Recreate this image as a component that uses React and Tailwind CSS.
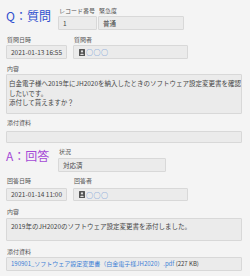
import React from "react";

const FONT = { fontFamily: '"Noto Sans CJK JP", "Noto Sans", sans-serif' };

function Label({ children, className = "" }) {
  return (
    <div className={"h-[10px] pl-[1px] text-[6px] leading-[10px] text-[#555] whitespace-nowrap " + className}>
      {children}
    </div>
  );
}

function Box({ children, className = "" }) {
  return (
    <div
      className={
        "border border-[#d8d8d8] bg-[#ebebeb] rounded-[1px] text-[#444] whitespace-nowrap overflow-hidden " +
        className
      }
    >
      {children}
    </div>
  );
}

function UserIcon() {
  return (
    <svg width="6" height="7" viewBox="0 0 6 7" className="shrink-0">
      <rect x="0" y="0" width="6" height="7" rx="0.5" fill="#555" />
      <circle cx="3" cy="2.4" r="1.1" fill="#ddd" />
      <path d="M1.2 6 C1.2 4.4 4.8 4.4 4.8 6 Z" fill="#ddd" />
    </svg>
  );
}

function Person() {
  return (
    <div className="flex items-center h-full pl-[5px] gap-[1px]">
      <UserIcon />
      <span className="text-[7px] leading-[12px] text-[#4a7fd0] tracking-[0.5px]">○○○</span>
    </div>
  );
}

export default function App() {
  return (
    <div className="w-[250px] h-[276px] bg-[#f4f4f4] overflow-hidden pl-[6px] pt-[6px]" style={FONT}>
      {/* Q section */}
      <div className="flex">
        <div className="w-[52px] pt-[4px] text-[12px] leading-[12px] text-[#2f4fcf] whitespace-nowrap">Q：質問</div>
        <div className="flex flex-col w-[40px]">
          <Label className="h-[9px] leading-[9px]">レコード番号</Label>
          <Box className="h-[14px] w-[39px] pl-[4px] text-[6.5px] leading-[12px]">1</Box>
        </div>
        <div className="flex flex-col w-[86px]">
          <Label className="h-[9px] leading-[9px] pl-[1px]">緊急度</Label>
          <Box className="h-[14px] w-[86px] pl-[4px] text-[6.5px] leading-[12px]">普通</Box>
        </div>
      </div>

      <div className="flex mt-[5px]">
        <div className="flex flex-col w-[67px]">
          <Label>質問日時</Label>
          <Box className="h-[14px] w-[61px] pl-[4px] text-[6.5px] leading-[12px]">2021-01-13 16:55</Box>
        </div>
        <div className="flex flex-col">
          <Label>質問者</Label>
          <Box className="h-[14px] w-[115px]"><Person /></Box>
        </div>
      </div>

      <Label className="mt-[5px]">内容</Label>
      <Box className="h-[40px] w-[236px] pl-[2px] pt-[4px] text-[6.5px] leading-[9.5px] whitespace-normal">
        白金電子様へ2019年にJH2020を納入したときのソフトウェア設定変更書を確認
        <br />
        したいです。
        <br />
        添付して貰えますか？
      </Box>

      <Label className="mt-[4px] h-[13px] leading-[9px]">添付資料</Label>
      <Box className="h-[12px] w-[236px]" />

      {/* A section */}
      <div className="flex mt-[4px]">
        <div className="w-[52px] pt-[3px] text-[12px] leading-[12px] text-[#a449d6] whitespace-nowrap">A：回答</div>
        <div className="flex flex-col">
          <Label>状況</Label>
          <Box className="mt-[1px] h-[14px] w-[108px] pl-[4px] text-[6.5px] leading-[12px]">対応済</Box>
        </div>
      </div>

      <div className="flex mt-[4px]">
        <div className="flex flex-col w-[67px]">
          <Label>回答日時</Label>
          <Box className="mt-[2px] h-[13px] w-[61px] pl-[4px] text-[6.5px] leading-[11px]">2021-01-14 11:00</Box>
        </div>
        <div className="flex flex-col">
          <Label>回答者</Label>
          <Box className="mt-[2px] h-[13px] w-[115px]"><Person /></Box>
        </div>
      </div>

      <Label className="mt-[6px] h-[9px] leading-[9px]">内容</Label>
      <Box className="mt-[1px] h-[23px] w-[236px] pl-[4px] pt-[3px] text-[6.5px] leading-[9.5px]">
        2019年のJH2020のソフトウェア設定変更書を添付しました。
      </Box>

      <Label className="mt-[6px]">添付資料</Label>
      <Box className="h-[14px] w-[236px] pl-[4px] text-[6px] leading-[12px]">
        <span className="text-[#3d7fd6]">190901_ソフトウェア設定変更書（白金電子様JH2020）.pdf</span>
        <span> (227 KB)</span>
      </Box>
    </div>
  );
}
